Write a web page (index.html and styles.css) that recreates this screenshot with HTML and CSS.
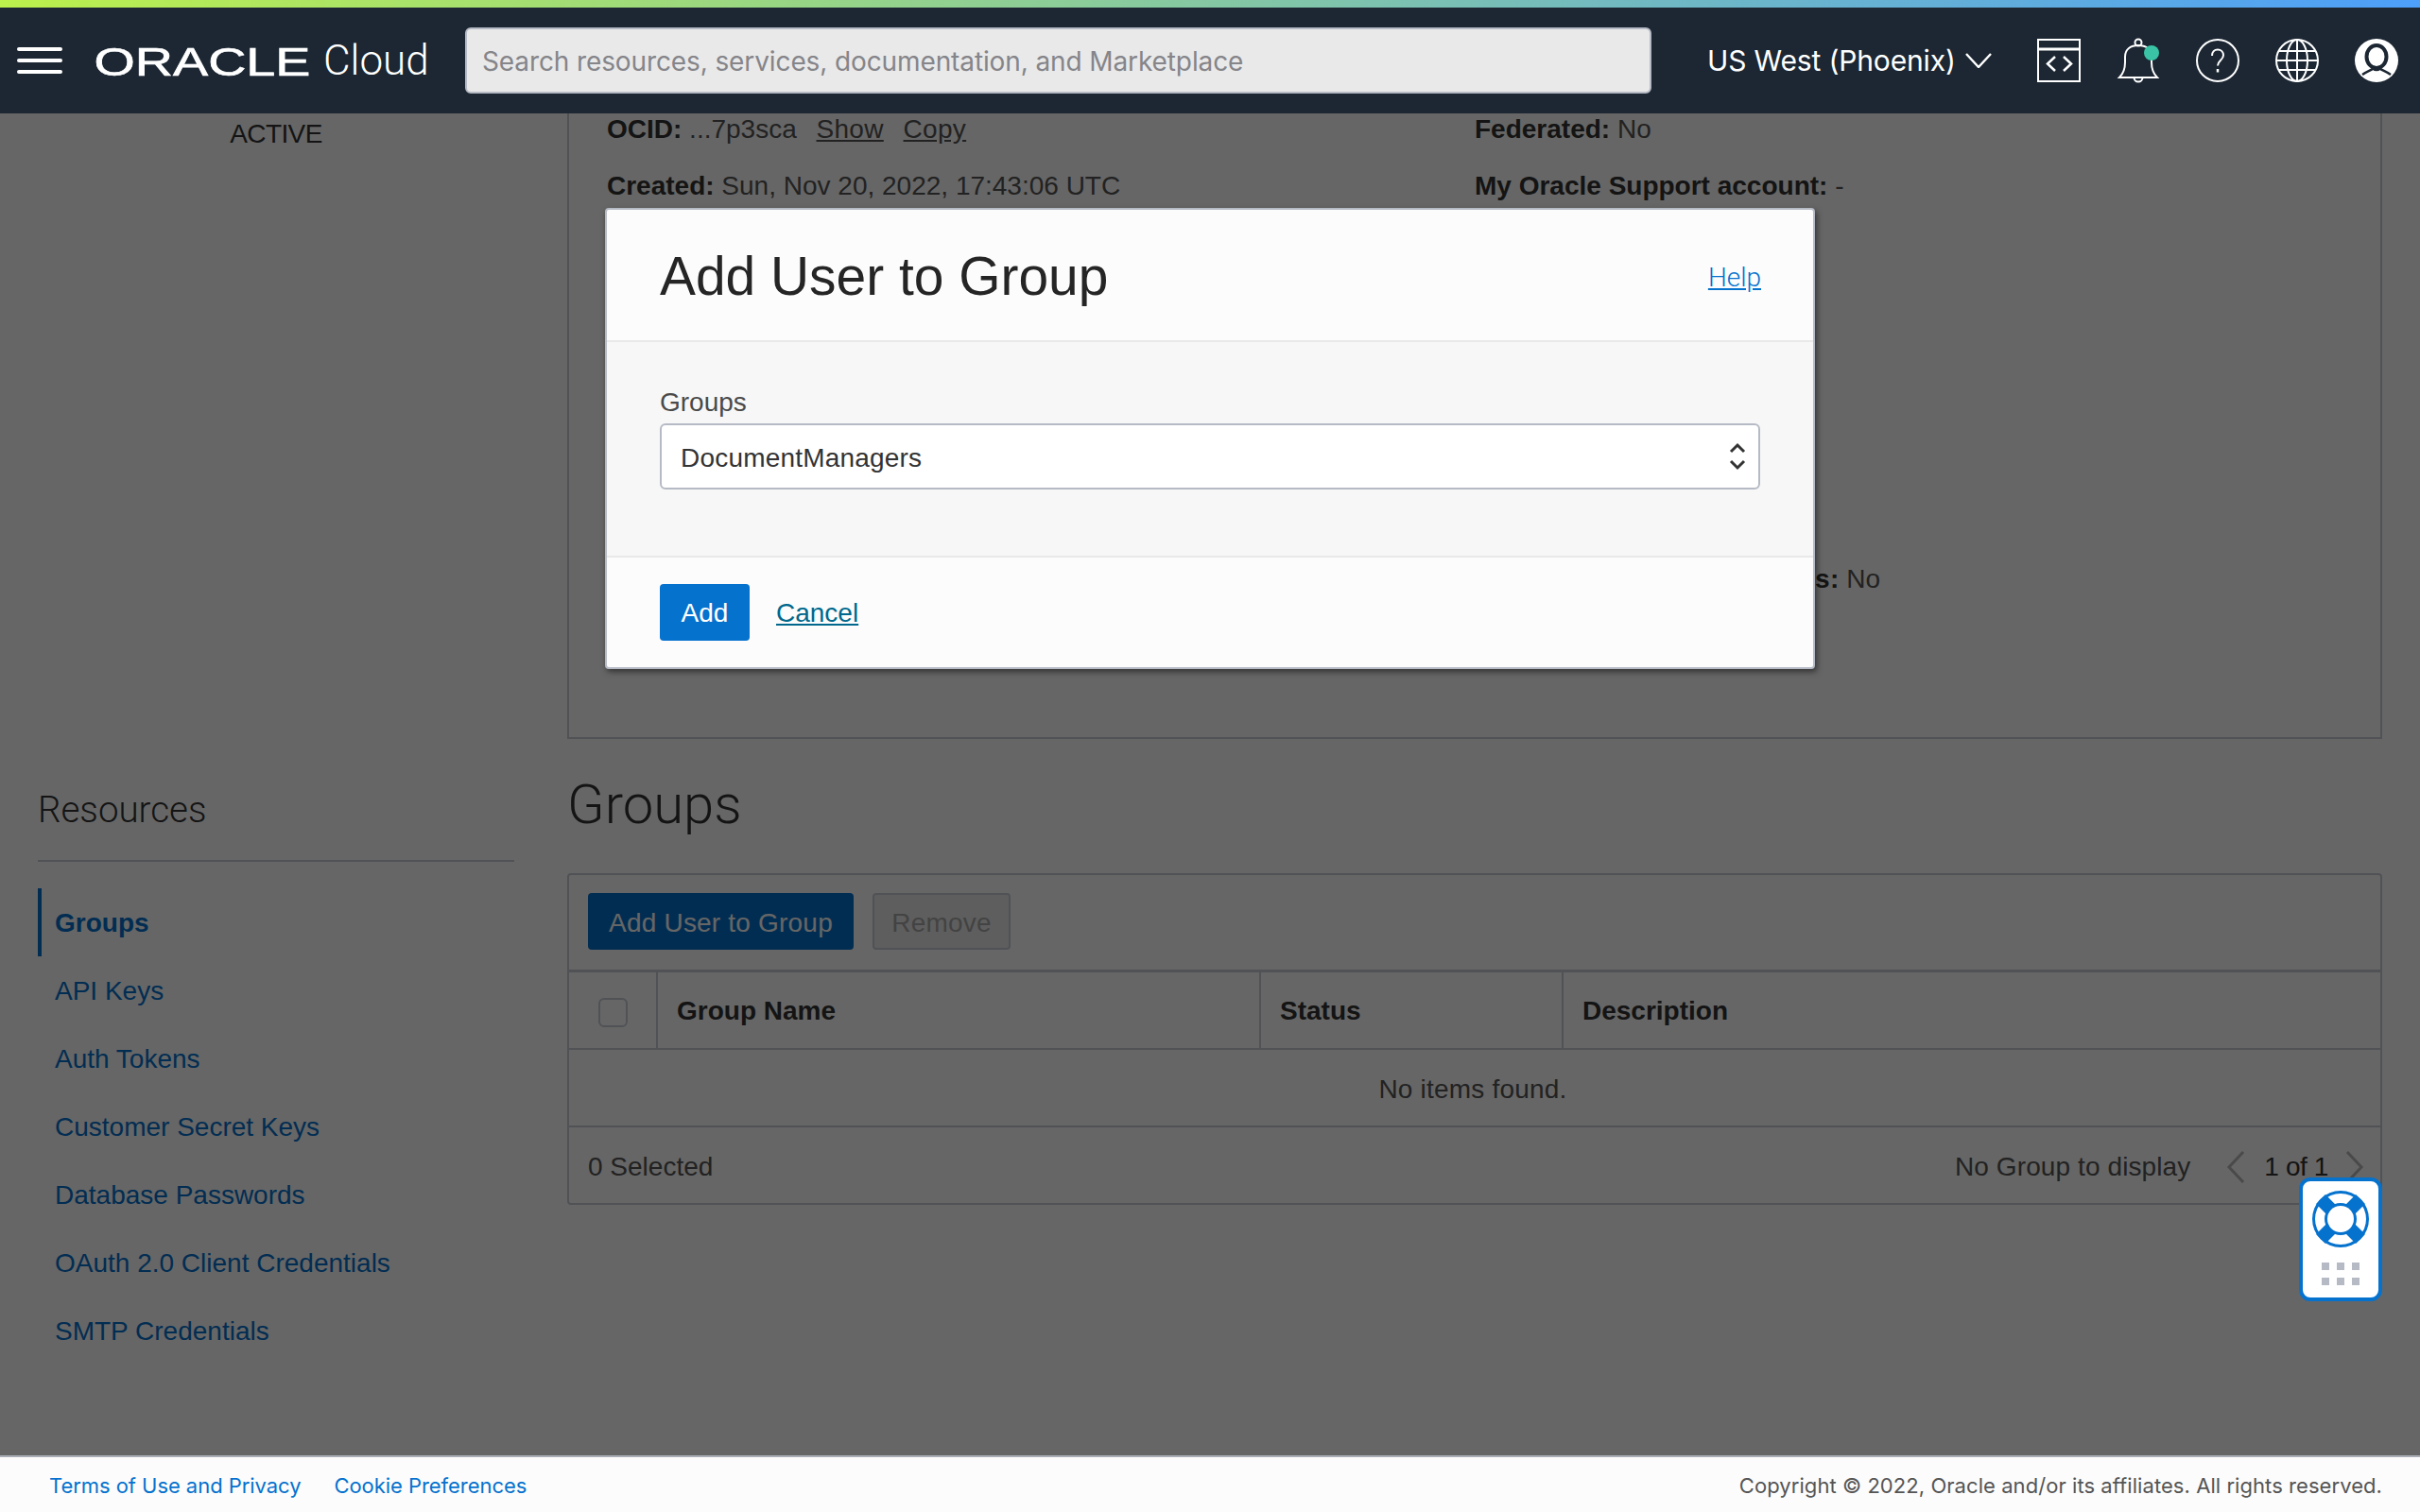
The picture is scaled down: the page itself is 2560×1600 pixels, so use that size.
FILE: index.html
```html
<!DOCTYPE html>
<html lang="en">
<head>
    <meta charset="UTF-8">
    <meta name="viewport" content="width=device-width, initial-scale=1.0">
    <title>Add User to Group</title>
    <link rel="stylesheet" href="styles.css">
</head>
<body>

    <div class="accent"></div>

    <header class="topbar">
        <button class="menu" aria-label="Menu"><span></span><span></span><span></span></button>
        <div class="logo">
            <svg class="wordmark" width="240" height="42" viewBox="0 0 240 42">
                <text x="0.500" y="36" textLength="229" lengthAdjust="spacingAndGlyphs">ORACLE</text>
            </svg>
            <span class="logo-cloud">Cloud</span>
        </div>
        <input class="search" type="text" placeholder="Search resources, services, documentation, and Marketplace">
        <div class="region">
            US West (Phoenix)
            <svg width="28" height="16" viewBox="0 0 28 16"><path d="M1 1l13 14L27 1" fill="none" stroke="#fff" stroke-width="2.4"/></svg>
        </div>
        <div class="tools">
            <svg width="46" height="46" viewBox="0 0 46 46" fill="none" stroke="#fff" stroke-width="2">
                <rect x="1" y="1" width="44" height="44"/>
                <path d="M1 11h44" stroke-width="3"/>
                <path d="M19 19l-8 7.500 8 7.500M28 19l8 7.500-8 7.500" stroke-width="2.500"/>
            </svg>
            <svg width="46" height="48" viewBox="0 0 46 48" fill="none" stroke="#fff" stroke-width="2">
                <circle cx="23" cy="5" r="3.500"/>
                <path d="M3 42c4-4 6-9 6-16v-6c0-8 6-12 14-12s14 4 14 12v6c0 7 2 12 6 16z"/>
                <path d="M18.500 42a4.500 4.500 0 0 0 9 0"/>
                <circle cx="37" cy="16" r="8" fill="#3ac4a5" stroke="none"/>
            </svg>
            <svg width="46" height="46" viewBox="0 0 46 46" fill="none" stroke="#fff" stroke-width="2">
                <circle cx="23" cy="23" r="22"/>
                <path d="M17 18c0-4 2.500-6.500 6-6.500s6 2.300 6 6c0 5-6 5.500-6 11"/>
                <path d="M23 32v3.500" stroke-width="2.500"/>
            </svg>
            <svg width="46" height="46" viewBox="0 0 46 46" fill="none" stroke="#fff" stroke-width="2">
                <circle cx="23" cy="23" r="22"/>
                <ellipse cx="23" cy="23" rx="11" ry="22"/>
                <path d="M23 1v44M4 13h38M1 23h44M4 33h38"/>
            </svg>
            <svg width="46" height="46" viewBox="0 0 46 46">
                <circle cx="23" cy="23" r="23" fill="#fff"/>
                <ellipse cx="23" cy="19" rx="10.500" ry="12" fill="#fff" stroke="#1c2733" stroke-width="4"/>
                <path d="M8 38c4-3 9-4.500 11.500-6.500 2 2 5 2 7 0C29 33.500 34 35 38 38" fill="none" stroke="#1c2733" stroke-width="2.500"/>
            </svg>
        </div>
    </header>

    <main class="page">
        <aside class="sidebar">
            <div class="status">ACTIVE</div>
            <h3>Resources</h3>
            <nav class="side-nav">
                <a class="active" href="#">Groups</a>
                <a href="#">API Keys</a>
                <a href="#">Auth Tokens</a>
                <a href="#">Customer Secret Keys</a>
                <a href="#">Database Passwords</a>
                <a href="#">OAuth 2.0 Client Credentials</a>
                <a href="#">SMTP Credentials</a>
            </nav>
        </aside>

        <section class="content">
            <div class="details">
                <div><b>OCID:</b> ...7p3sca <a href="#">Show</a> <a href="#">Copy</a></div>
                <div><b>Federated:</b> No</div>
                <div><b>Created:</b> Sun, Nov 20, 2022, 17:43:06 UTC</div>
                <div><b>My Oracle Support account:</b> -</div>
                <div class="detail-last"><b>Console sign-in capabilities:</b> No</div>
            </div>

            <h2>Groups</h2>

            <div class="card">
                <div class="toolbar">
                    <button class="btn-primary btn-wide">Add User to Group</button>
                    <button class="btn-disabled">Remove</button>
                </div>
                <table>
                    <thead>
                        <tr>
                            <th class="col-check"><span class="checkbox"></span></th>
                            <th class="col-name">Group Name</th>
                            <th class="col-status">Status</th>
                            <th>Description</th>
                        </tr>
                    </thead>
                    <tbody>
                        <tr><td colspan="4">No items found.</td></tr>
                    </tbody>
                </table>
                <div class="card-foot">
                    <span>0 Selected</span>
                    <div class="pager">
                        <span>No Group to display</span>
                        <svg width="20" height="34" viewBox="0 0 20 34"><path d="M18 1L3 17l15 16" fill="none" stroke="#b8b8b8" stroke-width="3"/></svg>
                        <span class="pager-count">1 of 1</span>
                        <svg width="20" height="34" viewBox="0 0 20 34"><path d="M2 1l15 16L2 33" fill="none" stroke="#b8b8b8" stroke-width="3"/></svg>
                    </div>
                </div>
            </div>
        </section>

        <div class="overlay"></div>

        <div class="modal">
            <div class="modal-head">
                <h1>Add User to Group</h1>
                <a class="help" href="#">Help</a>
            </div>
            <div class="modal-body">
                <label for="groups">Groups</label>
                <div class="select-wrap">
                    <select id="groups">
                        <option>DocumentManagers</option>
                    </select>
                    <svg width="18" height="30" viewBox="0 0 18 30" fill="none" stroke="#333" stroke-width="3"><path d="M2 10l7-7 7 7M2 20l7 7 7-7"/></svg>
                </div>
            </div>
            <div class="modal-foot">
                <button class="btn-primary btn-add">Add</button>
                <a class="cancel" href="#">Cancel</a>
            </div>
        </div>

        <div class="help-widget">
            <svg width="60" height="60" viewBox="0 0 60 60">
                <circle cx="30" cy="30" r="30" fill="#0572ce"/>
                <circle cx="30" cy="30" r="27" fill="#fff"/>
                <path d="M9 9l42 42M51 9L9 51" stroke="#0572ce" stroke-width="14"/>
                <circle cx="30" cy="30" r="17" fill="#0572ce"/>
                <circle cx="30" cy="30" r="14" fill="#fff"/>
            </svg>
            <div class="dots">
                <i></i><i></i><i></i><i></i><i></i><i></i>
            </div>
        </div>
    </main>

    <footer class="footer">
        <a href="#">Terms of Use and Privacy</a>
        <a href="#">Cookie Preferences</a>
        <span class="copyright">Copyright © 2022, Oracle and/or its affiliates. All rights reserved.</span>
    </footer>

</body>
</html>
```

FILE: styles.css
```css
* {
    box-sizing: border-box;
}
body {
    margin: 0;
    height: 100vh;
    display: flex;
    flex-direction: column;
    overflow: hidden;
    font-family: "Liberation Sans", Arial, sans-serif;
    font-size: 28px;
    color: #333;
    background-color: #fff;
}
button {
    font-family: inherit;
    font-size: 28px;
}
.accent {
    height: 8px;
    flex: none;
    background: linear-gradient(90deg, #bcf04c, #4d9ffa);
}

/* top bar */
.topbar {
    height: 112px;
    flex: none;
    display: flex;
    align-items: center;
    background-color: #1c2733;
    color: #fff;
    font-family: Inter, sans-serif;
}
.menu {
    width: 48px;
    height: 28px;
    margin-left: 18px;
    padding: 0;
    border: none;
    background: none;
    display: flex;
    flex-direction: column;
    justify-content: space-between;
}
.menu span {
    display: block;
    height: 4px;
    border-radius: 2px;
    background-color: #fff;
}
.logo {
    display: flex;
    align-items: flex-end;
    margin-left: 33px;
    width: 393px;
    flex: none;
}
.wordmark {
    overflow: visible;
}
.wordmark text {
    font-family: "Liberation Sans", sans-serif;
    font-size: 43px;
    fill: #fff;
    stroke: #fff;
    stroke-width: 0.7px;
}
.logo-cloud {
    margin-left: 3px;
    font-family: Roboto, sans-serif;
    font-weight: 300;
    font-size: 44px;
    line-height: 44px;
}
.search {
    width: 1255px;
    height: 70px;
    padding: 2px 16px 0;
    border: 2px solid #b5bac4;
    border-radius: 6px;
    background-color: #e9e9e9;
    font-family: Inter, sans-serif;
    font-size: 28px;
    letter-spacing: -0.11px;
}
.search::placeholder {
    color: #85858a;
    opacity: 1;
}
.region {
    display: flex;
    align-items: center;
    gap: 10px;
    margin-left: 59px;
    font-size: 30px;
    letter-spacing: -0.15px;
}
.tools {
    display: flex;
    align-items: center;
    gap: 38px;
    margin-left: 48px;
}

/* page under the dialog */
.page {
    position: relative;
    flex: 1;
    display: flex;
    gap: 56px;
    padding: 0 40px;
    overflow: hidden;
}
.sidebar {
    width: 504px;
    flex: none;
}
.status {
    margin-top: 6px;
    text-align: center;
    line-height: 32px;
    letter-spacing: -0.6px;
    color: #333;
}
.sidebar h3 {
    margin: 674px 0 0;
    padding-bottom: 28px;
    border-bottom: 2px solid #c7ccd6;
    font-family: Roboto, sans-serif;
    font-weight: 300;
    font-size: 38.500px;
    line-height: 50px;
    color: #333;
}
.side-nav {
    display: flex;
    flex-direction: column;
    margin-top: 28px;
}
.side-nav a {
    height: 72px;
    padding-left: 18px;
    line-height: 74px;
    color: #0572ce;
    text-decoration: none;
}
.side-nav .active {
    border-left: 4px solid #0572ce;
    padding-left: 14px;
    font-weight: bold;
}
.content {
    flex: 1;
    min-width: 0;
}
.details {
    height: 663px;
    margin-top: -1px;
    padding: 0 40px;
    border: 2px solid #c7ccd6;
    border-top: none;
    display: grid;
    grid-template-columns: 918px 1fr;
    grid-auto-rows: 60px;
    line-height: 36px;
    color: #555;
}
.details b {
    color: #333;
}
.details a {
    margin-left: 13px;
    letter-spacing: 0.3px;
    color: #555;
}
.detail-last {
    grid-column: 2;
    margin-top: 356px;
}
.detail-last b {
    letter-spacing: 0.2px;
}
.content h2 {
    margin: 39px 0 0;
    height: 103px;
    font-family: Roboto, sans-serif;
    font-weight: 300;
    font-size: 58px;
    line-height: 60px;
    color: #333;
}
.card {
    border: 2px solid #c7ccd6;
    border-radius: 4px;
}
.toolbar {
    display: flex;
    gap: 20px;
    height: 100px;
    padding: 19px 20px 0;
}
.btn-primary {
    height: 60px;
    padding: 2px 0 0;
    border: none;
    border-radius: 4px;
    background-color: #0572ce;
    color: #fff;
}
.btn-wide {
    width: 281px;
    padding-top: 3px;
    letter-spacing: 0.2px;
}
.btn-disabled {
    width: 146px;
    height: 60px;
    padding: 3px 0 0;
    border: 2px solid #c7ccd6;
    border-radius: 4px;
    background-color: #ececec;
    color: #a8a8a8;
    letter-spacing: 0.2px;
}
table {
    width: 100%;
    border-collapse: collapse;
    table-layout: fixed;
}
th {
    height: 82px;
    padding: 2px 20px 0;
    text-align: left;
    font-weight: bold;
    color: #333;
    border-top: 3px solid #c7ccd6;
    border-bottom: 2px solid #c7ccd6;
    border-left: 2px solid #c7ccd6;
}
th:first-child {
    border-left: none;
}
.col-check {
    width: 93px;
    padding: 0;
    text-align: center;
}
.col-name {
    width: 638px;
}
.col-status {
    width: 320px;
}
.checkbox {
    display: block;
    width: 31px;
    height: 31px;
    margin: 6px auto 0;
    border: 2px solid #c7ccd6;
    border-radius: 6px;
}
td {
    height: 82px;
    padding: 5px 4px 0 0;
    text-align: center;
    letter-spacing: 0.2px;
    color: #555;
    border-bottom: 2px solid #c7ccd6;
}
.card-foot {
    height: 80px;
    padding: 5px 20px 0;
    display: flex;
    align-items: center;
    justify-content: space-between;
    color: #555;
}
.pager {
    display: flex;
    align-items: center;
    gap: 18px;
    margin-right: -3px;
    letter-spacing: 0.1px;
}
.pager-count {
    margin-left: 2px;
    letter-spacing: -0.4px;
    color: #333;
}
.pager svg:first-of-type {
    margin-left: 20px;
}

.overlay {
    position: absolute;
    inset: 0;
    background-color: rgba(0, 0, 0, 0.6);
}

/* dialog */
.modal {
    position: absolute;
    left: 640px;
    top: 100px;
    width: 1280px;
    height: 488px;
    display: flex;
    flex-direction: column;
    border: 2px solid #b5bac4;
    border-radius: 4px;
    background-color: #fcfcfc;
    box-shadow: 2px 3px 6px rgba(0, 0, 0, 0.5);
}
.modal-head {
    height: 140px;
    padding: 2px 56px 0;
    display: flex;
    align-items: center;
    justify-content: space-between;
    border-bottom: 2px solid #e9e9e9;
}
.modal-head h1 {
    margin: 0;
    font-weight: normal;
    font-size: 56.900px;
    color: #252525;
}
.help {
    margin-right: -1px;
    padding-top: 2px;
    font-family: Roboto, sans-serif;
    font-weight: 300;
    font-size: 28px;
    color: #0572ce;
}
.modal-body {
    height: 228px;
    padding: 46px 56px 0;
    border-bottom: 2px solid #e9e9e9;
    background-color: #f7f7f7;
}
.modal-body label {
    display: block;
    line-height: 36px;
    margin-bottom: 4px;
    color: #4a4a4a;
}
.select-wrap {
    position: relative;
}
.select-wrap select {
    width: 100%;
    height: 70px;
    padding: 3px 20px 0;
    border: 2px solid #b5bac4;
    border-radius: 6px;
    background-color: #fff;
    font-family: inherit;
    font-size: 28px;
    letter-spacing: 0.2px;
    color: #333;
    appearance: none;
}
.select-wrap svg {
    position: absolute;
    right: 15px;
    top: 20px;
}
.modal-foot {
    padding: 28px 56px 0;
    display: flex;
    align-items: center;
    gap: 28px;
}
.btn-add {
    width: 95px;
}
.cancel {
    padding-top: 2px;
    color: #00688c;
}

/* floating help */
.help-widget {
    position: absolute;
    right: 40px;
    top: 1126px;
    width: 88px;
    height: 131px;
    padding-top: 10px;
    border: 4px solid #0572ce;
    border-radius: 12px;
    background-color: #fff;
    display: flex;
    flex-direction: column;
    align-items: center;
}
.dots {
    display: grid;
    grid-template-columns: repeat(3, 8px);
    gap: 8px;
    margin-top: 16px;
}
.dots i {
    height: 8px;
    background-color: #b5bac4;
}

.footer {
    height: 60px;
    flex: none;
    display: flex;
    align-items: center;
    padding: 2px 40px 0 52px;
    border-top: 2px solid #a9adb5;
    background-color: #fcfcfc;
    font-family: Inter, sans-serif;
    font-size: 22px;
}
.footer a {
    margin-right: 35px;
    letter-spacing: -0.05px;
    color: #0572ce;
    text-decoration: none;
}
.copyright {
    margin-left: auto;
    letter-spacing: 0.06px;
    color: #555;
}
```
